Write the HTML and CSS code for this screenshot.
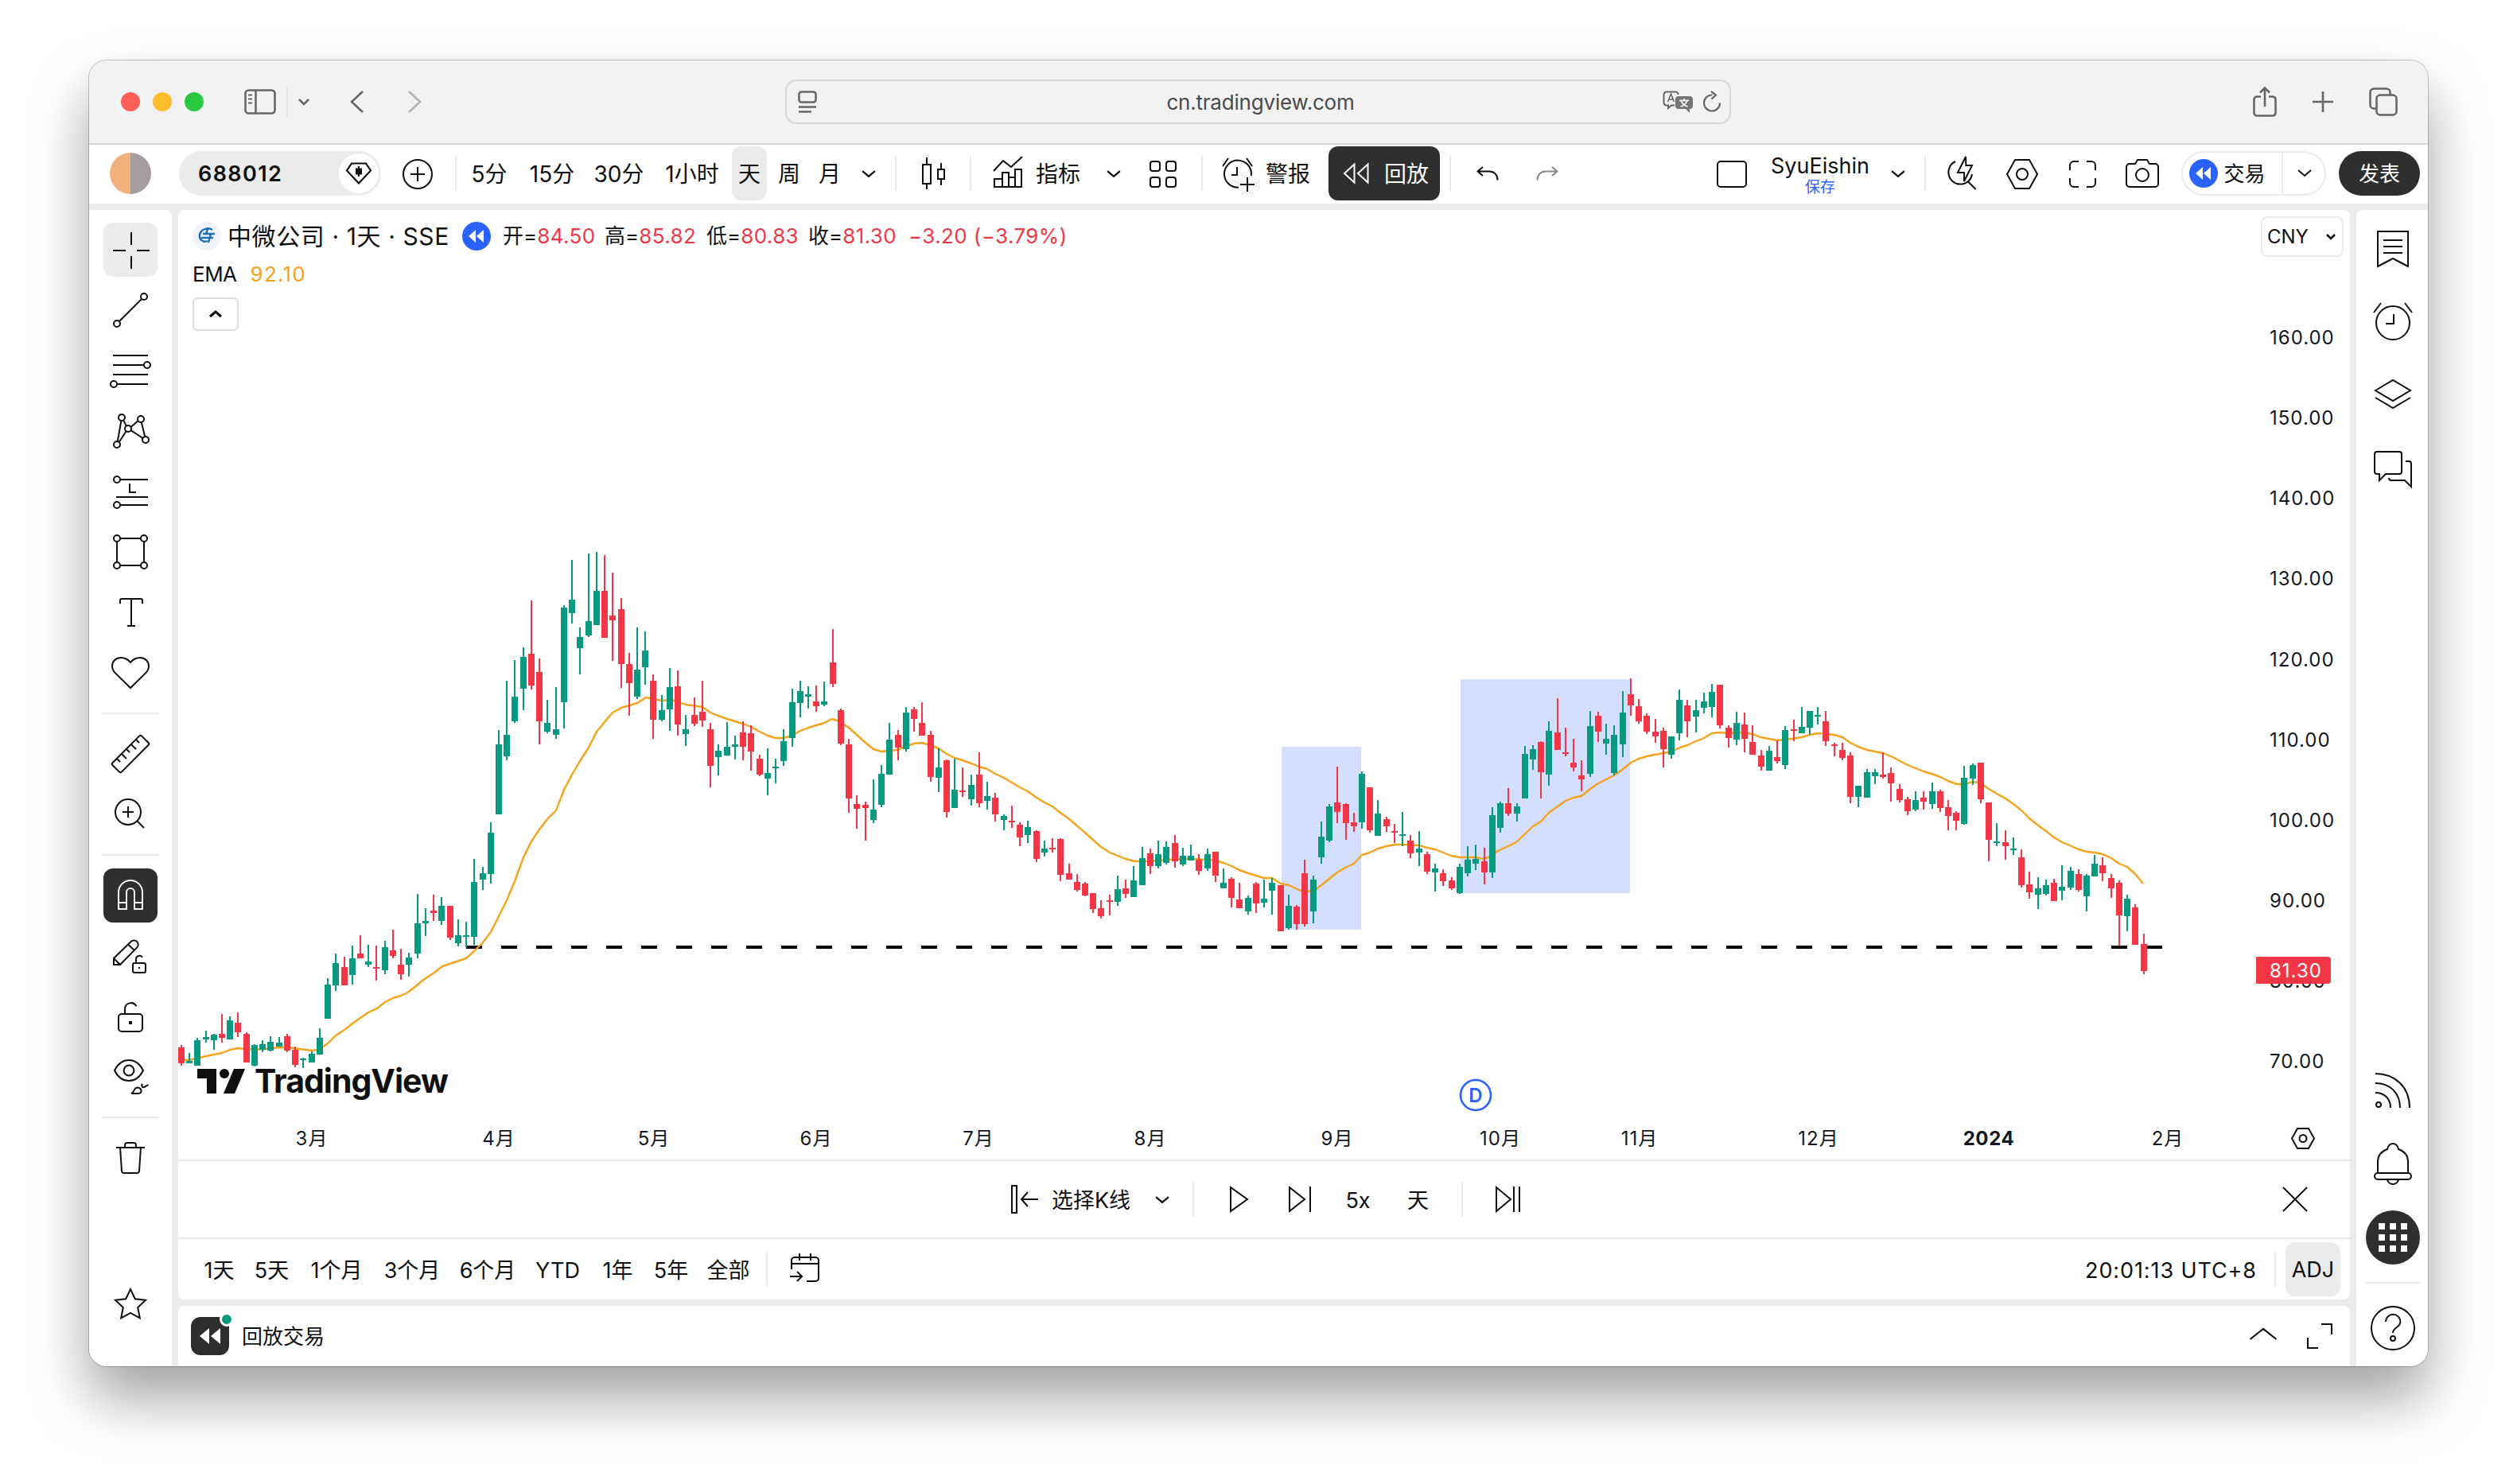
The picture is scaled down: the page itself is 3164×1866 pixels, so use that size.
FILE: index.html
```html
<!DOCTYPE html>
<html lang="zh-CN">
<head>
    <meta charset="UTF-8">
    <meta name="viewport" content="width=device-width, initial-scale=1.0">
    <title>688012 中微公司</title>
    <link rel="stylesheet" href="styles.css">
</head>
<body>
    <div class="window">

        <!-- Browser title bar -->
        <div class="titlebar">
            <span class="light red"></span>
            <span class="light yellow"></span>
            <span class="light green"></span>
            <svg class="tb-sidebar" width="40" height="32" viewBox="0 0 40 32"><rect x="1.5" y="1.5" width="37" height="29" rx="4"/><path d="M14.5 2v28"/><path d="M5 7.500h5M5 12.500h5M5 17.500h5" stroke-width="2"/></svg>
            <span class="tb-divider"></span>
            <svg class="tb-caret" width="16" height="10" viewBox="0 0 16 10"><path d="M2 2l6 6 6-6"/></svg>
            <svg class="tb-back" width="20" height="30" viewBox="0 0 20 30"><path d="M17 2L3 15l14 13"/></svg>
            <svg class="tb-forward" width="20" height="30" viewBox="0 0 20 30"><path d="M3 2l14 13L3 28"/></svg>
            <div class="address">
                <svg width="24" height="28" viewBox="0 0 24 28"><rect x="1.500" y="1.500" width="21" height="13" rx="3"/><path d="M1 20.500h22M1 26.500h16"/></svg>
                <span class="url">cn.tradingview.com</span>
                <svg class="translate" width="38" height="28" viewBox="0 0 38 28"><path d="M15 18.500h-4l-4 3.500v-3.500H5A3.500 3.500 0 0 1 1.500 15V5A3.500 3.500 0 0 1 5 1.500h11A3.500 3.500 0 0 1 19.500 5" stroke-width="2"/><path d="M6.500 14l4-10 4 10M8 11h5" stroke-width="1.600"/><path class="solid" d="M20 7h14a4 4 0 0 1 4 4v8a4 4 0 0 1-4 4v5l-5-5h-9a4 4 0 0 1-4-4v-8a4 4 0 0 1 4-4z"/><path class="cut" d="M21 12.500h12M27 10v2.500M23.500 13c1 3 4 6 8 7M30.500 13c-1 3-4 6-8 7"/></svg>
                <svg width="24" height="28" viewBox="0 0 24 28"><path d="M12.500 5.500a10 10 0 1 0 9.500 10" stroke-width="2.200"/><path d="M11 1l6 4.500-5.500 5" stroke-width="2.200"/></svg>
            </div>
            <svg class="tb-share" width="30" height="38" viewBox="0 0 30 38"><path d="M10 12.500H5a3.500 3.500 0 0 0-3.500 3.500v17A3.500 3.500 0 0 0 5 36.500h20a3.500 3.500 0 0 0 3.500-3.500V16a3.500 3.500 0 0 0-3.500-3.500h-5M15 25V2M9 7.500L15 1.500l6 6"/></svg>
            <svg class="tb-plus" width="28" height="28" viewBox="0 0 28 28"><path d="M14 1v26M1 14h26"/></svg>
            <svg class="tb-tabs" width="36" height="36" viewBox="0 0 36 36"><rect x="9.500" y="9.500" width="25" height="25" rx="4.500"/><path d="M9 26.500H6A4.500 4.500 0 0 1 1.500 22V6A4.500 4.500 0 0 1 6 1.500h16A4.500 4.500 0 0 1 26.500 6v3"/></svg>
        </div>

        <!-- Top toolbar -->
        <div class="toolbar">
            <span class="avatar"></span>
            <div class="symbol-search">
                <b>688012</b>
                <span class="symbol-badge"><svg width="34" height="28" viewBox="0 0 34 28"><path d="M8 1.500h18l6 9-15 16-15-16z"/><path class="solid" d="M13 7.500h8v8h-8z"/><path d="M17 5v13"/></svg></span>
            </div>
            <svg class="icon" viewBox="0 0 28 28"><circle cx="14" cy="14.500" r="9"/><path d="M14 10v9M9.500 14.500h9"/></svg>
            <i class="sep"></i>
            <span class="label">5分</span>
            <span class="label">15分</span>
            <span class="label">30分</span>
            <span class="label">1小时</span>
            <span class="interval-active">天</span>
            <span class="label">周</span>
            <span class="label">月</span>
            <svg class="caret" viewBox="0 0 16 8"><path d="M1 1l7 6 7-6"/></svg>
            <i class="sep"></i>
            <svg class="icon candle-icon" viewBox="0 0 28 28"><path d="M8 8.500h5v12H8zM10.500 4v4.500M10.500 20.500v3.500M17.500 11.500h4v6h-4zM19.500 7.500v4M19.500 17.500v4"/></svg>
            <i class="sep"></i>
            <div class="labelled">
                <svg class="icon" viewBox="0 0 28 28"><path d="M5 12.500l6-6.500 5 4 7-6.500M5.500 22.500v-5h5v5zM10.500 22.500v-9h4v9M14.500 22.500v-6h4v6M18.500 22.500V11.500h4v11h-17"/></svg>
                <span class="label">指标</span>
            </div>
            <svg class="caret" viewBox="0 0 16 8"><path d="M1 1l7 6 7-6"/></svg>
            <svg class="icon" viewBox="0 0 28 28"><rect x="6" y="6.500" width="6" height="6" rx="1.500"/><rect x="16" y="6.500" width="6" height="6" rx="1.500"/><rect x="6" y="16.500" width="6" height="6" rx="1.500"/><rect x="16" y="16.500" width="6" height="6" rx="1.500"/></svg>
            <i class="sep"></i>
            <div class="labelled alert">
                <svg class="icon" viewBox="0 0 28 28"><path d="M14.500 22.800a8.500 8.500 0 1 1 7.900-7.300M13.500 10v5h-3.500M4.500 9.500l3.500-5M23 9.500l-3.500-5M20 16.500v9M15.500 21h9"/></svg>
                <span class="label">警报</span>
            </div>
            <div class="replay-button">
                <svg width="34" height="28" viewBox="0 0 34 28"><path d="M14.500 2.500v23L2 14zM31.500 2.500v23L19 14z"/></svg>
                <span class="label">回放</span>
            </div>
            <i class="sep"></i>
            <svg class="undo" viewBox="0 0 28 18"><path d="M8 1L1.500 6.500 8 12M2 6.500h14c6 0 10.500 4 10.500 11"/></svg>
            <svg class="redo" viewBox="0 0 28 18"><path d="M20 1l6.500 5.500L20 12M26 6.500H12C6 6.500 1.500 10.500 1.500 17.500"/></svg>
            <span></span>
            <svg class="icon" viewBox="0 0 28 28"><rect x="5" y="6.500" width="18" height="16" rx="2"/></svg>
            <div class="layout-name"><span>SyuEishin</span><small>保存</small></div>
            <svg class="caret" viewBox="0 0 16 8"><path d="M1 1l7 6 7-6"/></svg>
            <i class="sep"></i>
            <svg class="icon" viewBox="0 0 28 28"><path d="M10 6.500a7.500 7.500 0 0 0 3 14.300c4 0 7-2.800 7.500-6.300M17.800 19l5 5M16.500 3.500l-5 10h4v5.500l5-10h-3.800z"/></svg>
            <svg class="icon" viewBox="0 0 28 28"><path d="M9.500 5.500h9l5 9-5 9h-9l-5-9z"/><circle cx="14" cy="14.500" r="3.500"/></svg>
            <svg class="icon" viewBox="0 0 28 28"><path d="M6 12V9a2.500 2.500 0 0 1 2.500-2.500h3M16.500 6.500h3A2.500 2.500 0 0 1 22 9v3M22 17v3a2.500 2.500 0 0 1-2.500 2.500h-3M11.500 22.500h-3A2.500 2.500 0 0 1 6 20v-3"/></svg>
            <svg class="icon" viewBox="0 0 28 28"><path d="M4 10a2 2 0 0 1 2-2h3.500L11 5.500h6L18.500 8H22a2 2 0 0 1 2 2v10.500a2 2 0 0 1-2 2H6a2 2 0 0 1-2-2z"/><circle cx="14" cy="15" r="4"/></svg>
            <div class="trade">
                <span class="rewind-badge"><svg viewBox="0 0 36 36"><path d="M17 10v16L8 18zM27 10v16l-9-8z"/></svg></span>
                <span class="label">交易</span>
                <span class="trade-more"><svg viewBox="0 0 20 10"><path d="M2 1l8 7 8-7"/></svg></span>
            </div>
            <div class="publish">发表</div>
        </div>

        <div class="workspace">

            <!-- Drawing tools -->
            <div class="tools">
                <span class="tool selected"><svg class="icon" viewBox="0 0 28 28"><path d="M14.500 3v8M14.500 18v8M3 14.500h8M18 14.500h8"/></svg></span>
                <span class="tool"><svg class="icon" viewBox="0 0 28 28"><circle cx="22.500" cy="5.500" r="2"/><circle cx="5.500" cy="22.500" r="2"/><path d="M7 21L21 7"/></svg></span>
                <span class="tool"><svg class="icon" viewBox="0 0 28 28"><path d="M3 4.500h22M3 10.500h19.500M3 16.500h22M5.500 22.500H25"/><circle cx="24.500" cy="10.500" r="2"/><circle cx="3.500" cy="22.500" r="2"/></svg></span>
                <span class="tool"><svg class="icon" viewBox="0 0 28 28"><circle cx="8.500" cy="5.500" r="2"/><circle cx="20.500" cy="6.500" r="2"/><circle cx="12.500" cy="12.500" r="2"/><circle cx="5.500" cy="22.500" r="2"/><circle cx="23.500" cy="19.500" r="2"/><path d="M8.200 7.500L5.900 20.500M9.600 7.200l1.800 3.600M6.800 21l4.500-6.900M14.200 11.500l4.500-3.900M20.900 8.500l2.200 9M14.300 13.600l7.500 4.900"/></svg></span>
                <span class="tool"><svg class="icon" viewBox="0 0 28 28"><path d="M7.500 6.500H25M13.500 9v5.500h4M5 17.500h20M7.500 22.500H25"/><circle cx="5.500" cy="6.500" r="2"/><circle cx="5.500" cy="22.500" r="2"/></svg></span>
                <span class="tool"><svg class="icon" viewBox="0 0 28 28"><circle cx="5.500" cy="5.500" r="2"/><circle cx="22.500" cy="5.500" r="2"/><circle cx="5.500" cy="22.500" r="2"/><circle cx="22.500" cy="22.500" r="2"/><path d="M7.500 5.500h13M7.500 22.500h13M5.500 7.500v13M22.500 7.500v13"/></svg></span>
                <span class="tool"><svg class="icon" viewBox="0 0 28 28"><path d="M7.500 8.500v-2a1 1 0 0 1 1-1h12a1 1 0 0 1 1 1v2M14.500 5.500v17M12 22.500h5"/></svg></span>
                <span class="tool"><svg class="icon" viewBox="0 0 28 28"><path d="M14 7.500C12.500 5.600 10.300 4.500 8 4.500c-3.200 0-5.500 2.300-5.500 5.300 0 1.800.8 3.200 2 4.400L14 23.500l9.500-9.300c1.200-1.200 2-2.600 2-4.400 0-3-2.300-5.300-5.500-5.300-2.300 0-4.500 1.100-6 3z"/></svg></span>
                <hr>
                <span class="tool"><svg class="icon" viewBox="0 0 28 28"><path d="M2.700 19.600L19.600 2.700a1 1 0 0 1 1.400 0l4.300 4.300a1 1 0 0 1 0 1.400L8.400 25.300a1 1 0 0 1-1.400 0l-4.300-4.300a1 1 0 0 1 0-1.400zM5.500 17l2 2M8.500 14l3 3M11.500 11l2 2M14.500 8l3 3M17.500 5l2 2"/></svg></span>
                <span class="tool"><svg class="icon" viewBox="0 0 28 28"><circle cx="12.500" cy="12.500" r="8"/><path d="M12.500 9v7M9 12.500h7M18.200 18.200l4.300 4.300"/></svg></span>
                <hr>
                <span class="tool dark"><svg class="icon" viewBox="0 0 28 28"><path d="M6.500 22.500V12a7.500 7.500 0 0 1 15 0v10.500h-5V12a2.500 2.500 0 0 0-5 0v10.500zM6.500 18.500h5M16.500 18.500h5"/></svg></span>
                <span class="tool"><svg class="icon" viewBox="0 0 28 28"><path d="M3.500 19.500v-4L14.300 5a2.600 2.600 0 0 1 3.800 3.700L7.500 19.500zM3.500 15.500l4 4M12.500 6.700l4 3.800"/><rect x="15.500" y="18.500" width="8" height="6" rx="1"/><path d="M17.500 18.500V16a2.200 2.200 0 0 1 4-1.200M19.500 21v1"/></svg></span>
                <span class="tool"><svg class="icon" viewBox="0 0 28 28"><rect x="6.500" y="12.500" width="15" height="11" rx="2"/><path d="M10.500 12.500V9.300a3.800 3.800 0 0 1 7.200-1.600"/><path d="M14 17v2" stroke-width="2"/></svg></span>
                <span class="tool"><svg class="icon" viewBox="0 0 28 28"><path d="M4 10c2-4 5.200-6.500 9-6.500s7 2.500 9 6.500c-2 4-5.200 6.500-9 6.500S6 14 4 10z"/><circle cx="13" cy="10" r="3.200"/><path d="M14.500 24.500c1.500-.5 1.500-2.500 3-3.500 1.500-.8 3.300.3 3.300 1.700 0 1-.8 1.800-2.300 1.800zM21.500 18.500c-1 1.200.2 2.600 1.500 1.800l2.200-1.300"/></svg></span>
                <hr>
                <span class="tool"><svg class="icon" viewBox="0 0 28 28"><path d="M5 7.500h18M10.500 7.500V6A1.500 1.500 0 0 1 12 4.500h4A1.500 1.500 0 0 1 17.500 6v1.500M7.500 7.500l1 14.600a1.500 1.500 0 0 0 1.500 1.400h8a1.500 1.500 0 0 0 1.500-1.400l1-14.600"/></svg></span>
                <span class="tool favorite"><svg class="icon" viewBox="0 0 28 28"><path d="M14 4.500l2.900 6.100 6.600.8-4.900 4.600 1.300 6.700-5.900-3.300-5.900 3.300L9.400 16l-4.900-4.600 6.600-.8z"/></svg></span>
            </div>

            <div class="center">
                <div class="panel">

                    <!-- Chart -->
                    <div class="chart">
                        <svg id="chart" class="plot" viewBox="224 264 2730 1194" width="2730" height="1194"></svg>
                        <div class="legend">
                            <div class="legend-row">
                                <span class="company-logo"><svg viewBox="0 0 36 36"><path d="M25 10c-6-4-15 0-16 6-1 7 5 10 10 8M13 15h15M11 20h15M19 9l-2 6M23 15l-3 11"/></svg></span>
                                <span class="company">中微公司 · 1天 · SSE</span>
                                <span class="rewind-badge"><svg viewBox="0 0 36 36"><path d="M17 10v16L8 18zM27 10v16l-9-8z"/></svg></span>
                                <span class="ohlc">开=<em>84.50</em></span>
                                <span class="ohlc">高=<em>85.82</em></span>
                                <span class="ohlc">低=<em>80.83</em></span>
                                <span class="ohlc">收=<em>81.30</em></span>
                                <span class="change">−3.20 (−3.79%)</span>
                            </div>
                            <div class="ema-row"><span>EMA</span><em>92.10</em></div>
                            <div class="collapse"><svg viewBox="0 0 18 10"><path d="M2 8l7-6 7 6"/></svg></div>
                        </div>
                        <div class="currency"><span>CNY</span><svg viewBox="0 0 12 8"><path d="M1 1l5 5 5-5"/></svg></div>
                    </div>

                    <!-- Replay controls -->
                    <div class="replay-bar">
                        <span></span>
                        <div class="labelled">
                            <svg class="icon" viewBox="0 0 28 28"><path d="M6.500 5.500h3v17h-3zM23 14H13M16.500 9.500L12.500 14l4 4.500"/></svg>
                            <span class="label">选择K线</span>
                        </div>
                        <svg class="caret" viewBox="0 0 16 8"><path d="M1 1l7 6 7-6"/></svg>
                        <i class="sep"></i>
                        <svg class="icon" viewBox="0 0 28 28"><path d="M9 6.500l10.500 7.500L9 21.500z"/></svg>
                        <svg class="icon" viewBox="0 0 28 28"><path d="M7.500 6.500L17 14l-9.500 7.500zM20.500 6v16"/></svg>
                        <span class="label">5x</span>
                        <span class="label">天</span>
                        <i class="sep"></i>
                        <svg class="icon" viewBox="0 0 28 28"><path d="M6.500 6.500L15.500 14l-9 7.500zM17.500 6v16M21 6v16"/></svg>
                        <span></span>
                        <svg class="icon" viewBox="0 0 28 28"><path d="M6.500 6.500l15 15M21.500 6.500l-15 15"/></svg>
                    </div>

                    <!-- Date ranges -->
                    <div class="range-bar">
                        <span class="label">1天</span>
                        <span class="label">5天</span>
                        <span class="label">1个月</span>
                        <span class="label">3个月</span>
                        <span class="label">6个月</span>
                        <span class="label">YTD</span>
                        <span class="label">1年</span>
                        <span class="label">5年</span>
                        <span class="label">全部</span>
                        <i class="sep"></i>
                        <svg class="icon" viewBox="0 0 28 28"><path d="M5.500 14V8.500a2 2 0 0 1 2-2h13a2 2 0 0 1 2 2v11a2 2 0 0 1-2 2H15M5.500 10.500h17M10.500 4v4.500M17.500 4v4.500M4.500 18.500h7M9 15.500l3 3-3 3"/></svg>
                        <span></span>
                        <span class="label clock">20:01:13 UTC+8</span>
                        <i class="sep"></i>
                        <span class="adj">ADJ</span>
                    </div>
                </div>

                <!-- Replay trading panel -->
                <div class="panel trading">
                    <span class="trading-icon"><svg viewBox="0 0 48 48"><path d="M23 14v20L11 24zM37 14v20L25 24z"/></svg><i></i></span>
                    <span class="label">回放交易</span>
                    <svg class="trading-up" viewBox="0 0 36 18"><path d="M1.500 16L18 3l16.500 13"/></svg>
                    <svg class="trading-max" viewBox="0 0 32 32"><path d="M18 1h13v13M1 18v13h13"/></svg>
                </div>
            </div>

            <!-- Right widget bar -->
            <div class="widgets">
                <span><svg class="icon" viewBox="0 0 28 28"><path d="M4.500 3h19v22L14 20l-9.500 5zM8 8.500h12M8 12.500h12M8 16.500h12"/></svg></span>
                <span><svg class="icon" viewBox="0 0 28 28"><circle cx="14" cy="14.500" r="10.500"/><path d="M14.500 9v6H9.500M2 8l4.500-6M26 8l-4.500-6"/></svg></span>
                <span><svg class="icon" viewBox="0 0 28 28"><path d="M3 11L14 4.500 25 11l-11 6.500zM3 15.500L14 22l11-6.500"/></svg></span>
                <span><svg class="icon" viewBox="0 0 28 28"><path d="M4 3.500h14a1.500 1.500 0 0 1 1.500 1.500v11a1.500 1.500 0 0 1-1.500 1.500H9.500l-4 4v-4H4A1.500 1.500 0 0 1 2.500 16V5A1.500 1.500 0 0 1 4 3.500zM22 9.500h2a1.500 1.500 0 0 1 1.500 1.500v14.500l-4-4H13a1.500 1.500 0 0 1-1.500-1.500"/></svg></span>
                <span class="push"><svg class="icon" viewBox="0 0 28 28"><circle cx="5" cy="22.500" r="1.500"/><path d="M3 3c12.500 0 21.500 8.500 21.500 21.500M3 9c9 0 15.500 6 15.500 15.500M3 15c5.500 0 9.500 3.500 9.500 9.500"/></svg></span>
                <span><svg class="icon" viewBox="0 0 28 28"><path d="M4.500 19.500v-7c0-4 2.300-6.700 6-8 .4-2 1.700-3.500 3.500-3.500s3.100 1.500 3.500 3.500c3.700 1.300 6 4 6 8v7"/><rect x="2.500" y="19.500" width="23" height="4" rx="2"/><path d="M10.500 23.500c.3 1.700 1.700 3 3.500 3s3.200-1.300 3.500-3"/></svg></span>
                <span><svg class="apps" viewBox="0 0 68 68"><circle cx="34" cy="34" r="34"/><path d="M16 16h8v8h-8zM30 16h8v8h-8zM44 16h8v8h-8zM16 30h8v8h-8zM30 30h8v8h-8zM44 30h8v8h-8zM16 44h8v8h-8zM30 44h8v8h-8zM44 44h8v8h-8z"/></svg></span>
                <hr>
                <span><svg class="icon" viewBox="0 0 28 28"><circle cx="14" cy="14" r="13.500"/><path d="M9.500 10a4.600 4.600 0 0 1 9.200 0c0 3.500-4.700 3.500-4.700 7"/><circle cx="14" cy="20.500" r="1.500"/></svg></span>
            </div>
        </div>
    </div>

    <script src="script.js"></script>
</body>
</html>
```
FILE: styles.css
```css
* {
    box-sizing: border-box;
}
body {
    margin: 0;
    height: 1866px;
    background-color: #fff;
    color: #0f0f0f;
    font-family: Inter, "Noto Sans CJK SC", sans-serif;
    font-size: 28px;
    line-height: 1;
    overflow: hidden;
}
em, i {
    font-style: normal;
}
svg {
    display: block;
    flex-shrink: 0;
    fill: none;
    stroke: #0f0f0f;
}
.window {
    width: 2940px;
    height: 1642px;
    margin: 76px 0 0 112px;
    display: flex;
    flex-direction: column;
    border-radius: 22px;
    overflow: hidden;
    background-color: #ebebeb;
    box-shadow: 0 0 0 1px rgba(0, 0, 0, 0.22), 0 40px 72px rgba(0, 0, 0, 0.37);
}

/* Browser title bar */
.titlebar {
    height: 106px;
    display: flex;
    align-items: center;
    padding: 0 38px 0 40px;
    background-color: #f2f2f2;
    border-bottom: 2px solid #d9d9d9;
}
.titlebar svg {
    stroke: #666;
    stroke-width: 2.6;
}
.light {
    width: 24px;
    height: 24px;
    margin-right: 16px;
    border-radius: 50%;
}
.red { background-color: #ff5f57; }
.yellow { background-color: #febc2e; }
.green { background-color: #28c840; }
.tb-sidebar { margin-left: 35px; }
.tb-divider {
    width: 2px;
    height: 36px;
    margin: 0 12px 0 13px;
    background-color: #e4e4e4;
}
.tb-back { margin-left: 49px; }
.tb-forward { margin-left: 52px; opacity: 0.45; }
.address {
    width: 1190px;
    height: 56px;
    margin-left: 456px;
    padding: 0 10px 0 14px;
    display: flex;
    align-items: center;
    border: 2px solid #d8d8d8;
    border-radius: 14px;
}
.url {
    flex: 1;
    padding: 2px 0 0 52px;
    text-align: center;
    font-size: 26px;
    letter-spacing: -0.2px;
    color: #4a4a4a;
}
.translate { margin-right: 12px; }
.address .solid { fill: #757575; stroke: none; }
.address .cut { stroke: #f2f2f2; stroke-width: 1.8; }
.tb-share { margin-left: 656px; }
.tb-plus { margin-left: 44px; }
.tb-tabs { margin-left: 44px; }

/* Top toolbar */
.toolbar {
    height: 74px;
    display: grid;
    grid-template-columns: 104px 266px 86px 10px 74px 84px 84px 100px 44px 56px 46px 52px 16px 78px 16px 141px 62px 62px 35px 136px 152px 14px 79px 72px 1fr 72px 150px 46px 22px 70px 82px 70px 79px 201px 116px;
    align-items: center;
    justify-items: center;
    padding: 0 3px 2px 0;
    background-color: #fff;
    white-space: nowrap;
}
.label {
    padding-top: 2px;
}
.icon {
    width: 56px;
    height: 56px;
}
.candle-icon {
    margin-right: 2px;
}
.caret {
    width: 18px;
    height: 9px;
    stroke-width: 2;
}
.sep {
    width: 2px;
    height: 44px;
    background-color: #ebebeb;
}
.avatar {
    width: 52px;
    height: 52px;
    border-radius: 50%;
    background: linear-gradient(90deg, #f0b27c 50%, #a69b9f 50%);
}
.symbol-search {
    width: 254px;
    height: 56px;
    margin-left: 6px;
    padding: 0 3px 0 24px;
    display: flex;
    align-items: center;
    justify-content: space-between;
    border-radius: 28px;
    background-color: #ebebeb;
}
.symbol-search b {
    font-weight: 600;
    letter-spacing: 1.4px;
    font-size: 27px;
}
.symbol-badge {
    width: 50px;
    height: 50px;
    display: flex;
    align-items: center;
    justify-content: center;
    border-radius: 50%;
    background-color: #fff;
}
.symbol-badge svg {
    stroke-width: 2.2;
}
.symbol-badge .solid {
    fill: #0f0f0f;
    stroke: none;
}
.interval-active {
    width: 44px;
    height: 68px;
    line-height: 70px;
    text-align: center;
    border-radius: 12px;
    background-color: #ebebeb;
}
.labelled {
    display: flex;
    align-items: center;
    gap: 7px;
}
.alert {
    justify-self: start;
}
.replay-button {
    width: 140px;
    height: 68px;
    padding-left: 18px;
    display: flex;
    align-items: center;
    gap: 18px;
    border-radius: 12px;
    background-color: #2e2e2e;
    color: #fff;
}
.replay-button svg {
    stroke: #fff;
    stroke-width: 2;
}
.undo, .redo {
    width: 28px;
    height: 18px;
    stroke-width: 2;
}
.redo {
    opacity: 0.5;
}
.layout-name {
    display: flex;
    flex-direction: column;
    align-items: center;
    gap: 4px;
    padding-top: 4px;
    font-size: 27px;
}
.layout-name small {
    font-size: 19px;
    color: #2962ff;
}
.trade {
    width: 182px;
    height: 56px;
    padding-left: 8px;
    display: flex;
    align-items: center;
    border: 2px solid #ebebeb;
    border-radius: 28px;
    font-size: 26px;
}
.rewind-badge {
    width: 36px;
    height: 36px;
    border-radius: 50%;
    background-color: #2962ff;
}
.rewind-badge path {
    fill: #fff;
    stroke: none;
}
.trade .rewind-badge {
    margin-right: 8px;
}
.trade-more {
    height: 100%;
    margin-left: 20px;
    padding-left: 17px;
    display: flex;
    align-items: center;
    border-left: 2px solid #ebebeb;
}
.trade-more svg {
    width: 20px;
    height: 10px;
    stroke-width: 2;
}
.publish {
    width: 102px;
    height: 56px;
    line-height: 58px;
    text-align: center;
    border-radius: 28px;
    background-color: #2e2e2e;
    color: #fff;
    font-size: 26px;
}

/* Workspace */
.workspace {
    flex: 1;
    display: flex;
    gap: 8px;
    padding-top: 8px;
    min-height: 0;
}
.tools {
    width: 104px;
    padding: 16px 0 44px;
    display: flex;
    flex-direction: column;
    align-items: center;
    gap: 8px;
    border-top-right-radius: 8px;
    background-color: #fff;
}
.tool {
    width: 68px;
    height: 68px;
    display: flex;
    align-items: center;
    justify-content: center;
    border-radius: 12px;
}
.selected {
    background-color: #ebebeb;
}
.dark {
    background-color: #2e2e2e;
}
.dark svg {
    stroke: #fff;
}
.tools hr, .widgets hr {
    width: 72px;
    height: 2px;
    margin: 8px 0;
    border: none;
    background-color: #ebebeb;
}
.favorite {
    margin-top: auto;
}
.center {
    flex: 1;
    display: flex;
    flex-direction: column;
    gap: 8px;
}
.panel {
    border-radius: 8px;
    background-color: #fff;
}

/* Chart */
.chart {
    position: relative;
    height: 1194px;
}
.plot text {
    fill: #131722;
    stroke: none;
    font-size: 24px;
    letter-spacing: 1px;
}
.plot .time-label {
    text-anchor: middle;
}
.plot .strong {
    font-weight: 700;
    letter-spacing: 0.6px;
}
.plot .brand {
    font-size: 41px;
    font-weight: 700;
    letter-spacing: -1px;
    fill: #0f0f0f;
}
.plot .dividend {
    fill: #2962ff;
    font-weight: 600;
    text-anchor: middle;
    letter-spacing: 0;
}
.plot .marker { stroke: #2962ff; stroke-width: 2.6; }
.plot .last-price { fill: #fff; }
.plot .up { fill: #089981; stroke: none; }
.plot .down { fill: #f23645; stroke: none; }
.plot .ink { fill: #0f0f0f; stroke: none; }
.plot .zone { fill: #d4deff; stroke: none; }
.plot .ema { stroke: #f7a21b; stroke-width: 2.4; stroke-linejoin: round; }
.plot .support { stroke: #000; stroke-width: 4; stroke-dasharray: 20 24; }
.legend {
    position: absolute;
    top: 14px;
    left: 18px;
}
.legend-row {
    height: 38px;
    display: flex;
    align-items: center;
    white-space: nowrap;
}
.company-logo {
    width: 36px;
    height: 36px;
    margin-right: 8px;
    border-radius: 50%;
    background-color: #f0f3fa;
}
.company-logo path {
    stroke: #1a6fb5;
    stroke-width: 2.4;
}
.company {
    width: 295px;
    font-size: 30px;
    letter-spacing: 0.6px;
}
.legend .rewind-badge {
    margin-right: 15px;
}
.ohlc {
    width: 128px;
    font-size: 26px;
}
.legend em, .change {
    color: #f23645;
    font-size: 26px;
}
.ohlc em {
    letter-spacing: 0.4px;
}
.change {
    margin-left: -2px;
    letter-spacing: 0.4px;
}
.ema-row {
    height: 58px;
    display: flex;
    align-items: center;
    gap: 17px;
    font-size: 26px;
    letter-spacing: -0.5px;
}
.ema-row em {
    color: #f7a21b;
    letter-spacing: 1.2px;
}
.collapse {
    width: 58px;
    height: 42px;
    display: flex;
    align-items: center;
    justify-content: center;
    border: 2px solid #dcdcdc;
    border-radius: 6px;
}
.collapse svg {
    width: 18px;
    height: 10px;
    stroke-width: 3;
}
.currency {
    position: absolute;
    top: 8px;
    right: 8px;
    width: 104px;
    height: 51px;
    padding: 0 8px 0 6px;
    display: flex;
    align-items: center;
    justify-content: space-between;
    border: 2px solid #ebebeb;
    border-radius: 8px;
    background-color: #fff;
    font-size: 24px;
}
.currency svg {
    width: 12px;
    height: 8px;
    stroke-width: 2.6;
}

/* Replay controls and date ranges */
.replay-bar, .range-bar {
    display: grid;
    align-items: center;
    justify-items: center;
    border-top: 2px solid #ebebeb;
    white-space: nowrap;
}
.replay-bar {
    height: 98px;
    grid-template-columns: 1033px 166px 75px 4px 110px 44px 102px 49px 61px 56px 1fr 69px;
    padding-right: 35px;
    font-size: 27px;
}
.range-bar {
    height: 78px;
    grid-template-columns: 63px 69px 94px 96px 94px 82px 69px 65px 79px 18px 78px 1fr 258px 4px 91px;
    padding: 0 1px 0 20px;
    font-size: 27px;
}
.clock {
    letter-spacing: 0.9px;
}
.adj {
    width: 69px;
    height: 68px;
    line-height: 70px;
    text-align: center;
    border-radius: 12px;
    background-color: #ebebeb;
}

/* Replay trading panel */
.trading {
    flex: 1;
    display: flex;
    align-items: center;
    padding: 0 22px 0 16px;
    border-radius: 8px 8px 0 0;
    font-size: 26px;
}
.trading-icon {
    position: relative;
    width: 48px;
    height: 48px;
    margin-right: 16px;
    border-radius: 12px;
    background-color: #2e2e2e;
}
.trading-icon path {
    fill: #fff;
    stroke: none;
}
.trading-icon i {
    position: absolute;
    top: -6px;
    right: -6px;
    width: 18px;
    height: 18px;
    border: 3px solid #fff;
    border-radius: 50%;
    background-color: #089981;
}
.trading-up {
    width: 36px;
    height: 18px;
    margin: 0 37px 6px auto;
    stroke-width: 2.2;
}
.trading-max {
    width: 32px;
    height: 32px;
    stroke-width: 2;
}

/* Right widget bar */
.widgets {
    width: 90px;
    padding: 3px 0 2px 2px;
    display: flex;
    flex-direction: column;
    align-items: center;
    border-top-left-radius: 8px;
    background-color: #fff;
}
.widgets span {
    height: 92px;
    display: flex;
    align-items: center;
}
.widgets .push {
    margin-top: auto;
}
.widgets hr {
    width: 68px;
    margin: 10px 0;
}
.apps {
    width: 68px;
    height: 68px;
}
.apps circle { fill: #2e2e2e; stroke: none; }
.apps path { fill: #fff; stroke: none; }
```
FILE: script.js
```js
// [up, high, body top, body bottom, low]
const candles = [
    [0,1314,1317,1337,1340],[1,1324,1334,1337,1337],[1,1305,1308,1340,1340],[1,1296,1304,1307,1311],[1,1300,1301,1308,1320],
    [0,1275,1300,1305,1311],[1,1278,1283,1307,1307],[0,1273,1286,1298,1304],[0,1298,1300,1336,1336],[1,1313,1314,1340,1341],
    [1,1308,1313,1320,1323],[1,1303,1310,1321,1322],[1,1304,1311,1316,1316],[0,1300,1303,1321,1323],[0,1316,1320,1339,1342],
    [1,1330,1331,1333,1343],[1,1322,1325,1336,1336],[1,1293,1305,1326,1326],[1,1230,1238,1281,1281],[1,1199,1211,1239,1246],
    [0,1203,1216,1239,1239],[1,1189,1205,1226,1238],[0,1176,1199,1205,1205],[1,1188,1209,1213,1216],[0,1189,1216,1218,1233],
    [1,1183,1191,1220,1225],[0,1169,1195,1202,1205],[0,1193,1213,1225,1232],[1,1198,1204,1213,1228],[1,1124,1161,1199,1205],
    [1,1142,1158,1161,1177],[0,1125,1145,1148,1158],[1,1128,1139,1158,1163],[0,1139,1139,1179,1182],[1,1156,1176,1186,1190],
    [1,1159,1176,1178,1191],[1,1080,1109,1178,1188],[1,1090,1098,1106,1119],[1,1034,1047,1099,1111],[1,918,936,1024,1024],
    [1,856,924,951,956],[1,830,876,907,909],[1,814,826,866,893],[0,755,822,862,867],[0,828,845,907,936],
    [1,880,909,920,922],[1,864,917,924,929],[1,761,764,883,916],[1,704,754,771,784],[1,789,801,815,848],
    [1,696,781,799,801],[1,694,743,786,786],[0,698,743,802,802],[0,720,774,780,831],[0,752,766,835,865],
    [0,821,835,859,900],[1,789,842,876,879],[1,794,818,839,861],[0,848,856,905,929],[1,874,893,905,907],
    [1,840,864,892,919],[0,843,863,911,925],[1,899,917,923,938],[0,877,899,910,913],[0,856,895,906,914],
    [0,909,917,963,990],[1,936,944,952,975],[1,908,939,950,950],[1,925,936,939,955],[0,907,921,939,956],
    [0,912,922,945,969],[0,949,954,974,976],[1,941,972,979,1000],[1,954,964,966,985],[1,917,932,957,963],
    [1,866,883,928,939],[1,856,869,884,902],[1,863,873,876,891],[0,862,882,888,895],[1,857,882,886,888],
    [0,791,833,860,864],[0,891,893,935,937],[0,929,936,1004,1022],[0,1000,1011,1017,1042],[0,1008,1012,1016,1057],
    [1,980,1018,1031,1035],[1,962,973,1012,1015],[1,909,930,974,974],[0,918,924,940,956],[1,889,896,942,945],
    [0,889,892,904,920],[0,883,909,925,925],[0,919,924,977,983],[1,941,965,978,996],[0,955,956,1021,1028],
    [1,954,993,1016,1016],[0,965,994,996,1002],[1,974,987,1005,1013],[0,946,974,1010,1015],[1,983,1001,1007,1018],
    [0,997,1003,1024,1033],[1,1024,1026,1031,1044],[0,1013,1032,1034,1041],[0,1034,1037,1053,1064],[1,1032,1040,1050,1060],
    [0,1044,1045,1080,1084],[1,1057,1067,1072,1077],[0,1054,1066,1068,1072],[0,1054,1055,1100,1108],[0,1086,1098,1106,1106],
    [0,1099,1109,1119,1121],[0,1109,1111,1126,1127],[0,1123,1123,1143,1148],[0,1132,1142,1152,1155],[0,1125,1132,1134,1151],
    [1,1101,1118,1134,1139],[0,1106,1117,1124,1129],[1,1089,1107,1128,1128],[1,1065,1079,1113,1113],[0,1067,1073,1089,1099],
    [1,1057,1074,1089,1092],[1,1058,1065,1085,1087],[0,1050,1060,1083,1091],[1,1066,1076,1087,1089],[1,1062,1076,1082,1082],
    [0,1074,1081,1095,1100],[1,1067,1074,1092,1095],[0,1071,1071,1101,1109],[1,1092,1110,1117,1117],[0,1103,1105,1129,1141],
    [0,1110,1131,1142,1142],[1,1126,1129,1146,1150],[0,1109,1111,1136,1148],[1,1106,1130,1135,1141],[1,1104,1110,1120,1150],
    [0,1113,1113,1171,1171],[1,1125,1139,1167,1169],[0,1138,1140,1162,1169],[0,1081,1098,1162,1165],[1,1101,1106,1146,1161],
    [1,1033,1052,1078,1086],[1,1011,1014,1057,1059],[0,964,1009,1021,1035],[0,1010,1011,1035,1056],[0,1022,1034,1039,1046],
    [1,970,973,1034,1042],[0,990,990,1044,1047],[1,1006,1023,1051,1051],[0,1027,1030,1039,1046],[0,1036,1045,1047,1060],
    [1,1021,1049,1051,1064],[0,1050,1057,1073,1079],[1,1045,1067,1072,1089],[0,1071,1074,1096,1099],[1,1086,1092,1097,1121],
    [0,1093,1098,1108,1114],[0,1103,1107,1117,1119],[1,1086,1090,1123,1124],[1,1064,1081,1098,1102],[1,1062,1080,1086,1094],
    [0,1066,1083,1097,1112],[1,1015,1025,1097,1104],[1,1008,1010,1041,1047],[0,991,1010,1023,1026],[1,1010,1014,1023,1033],
    [1,938,948,1004,1004],[1,937,942,955,968],[0,932,933,971,1004],[1,907,919,974,988],[0,878,921,943,943],
    [0,915,946,948,951],[0,929,959,965,970],[0,956,975,980,995],[1,894,913,973,977],[0,895,900,920,933],
    [1,910,929,935,949],[1,912,924,972,975],[1,869,896,936,952],[0,853,873,887,900],[0,879,888,907,910],
    [0,897,900,920,923],[0,904,920,926,934],[0,915,919,942,965],[1,926,926,949,954],[1,867,880,922,931],
    [0,880,887,907,927],[1,880,893,901,921],[1,871,882,890,897],[1,860,870,889,902],[0,861,861,912,916],
    [0,912,915,928,940],[1,895,909,930,937],[0,896,911,929,946],[0,912,933,949,949],[0,943,950,964,969],
    [1,938,944,969,969],[0,931,952,957,960],[1,913,918,962,967],[0,905,917,919,932],[1,889,914,922,922],
    [1,894,894,915,924],[1,889,899,901,911],[0,894,907,932,938],[0,934,936,938,951],[0,934,943,953,956],
    [0,946,950,1002,1010],[1,988,988,1002,1015],[1,967,971,1003,1003],[1,967,971,976,986],[0,946,974,977,979],
    [0,965,972,985,1008],[0,986,992,1006,1009],[0,1002,1005,1020,1025],[1,995,1006,1018,1020],[0,995,1003,1008,1018],
    [1,984,995,1011,1017],[0,993,995,1016,1021],[0,1006,1015,1026,1044],[0,1020,1022,1032,1044],[1,963,978,1036,1037],
    [1,960,962,979,987],[0,959,959,1005,1010],[0,1009,1009,1056,1083],[1,1035,1058,1060,1064],[0,1044,1059,1064,1081],
    [1,1053,1067,1069,1075],[0,1068,1078,1113,1116],[0,1096,1112,1122,1130],[1,1103,1117,1125,1143],[1,1106,1113,1124,1126],
    [0,1105,1110,1133,1133],[1,1088,1115,1120,1132],[1,1090,1095,1116,1119],[0,1093,1099,1119,1121],[1,1099,1101,1127,1146],
    [1,1075,1086,1102,1102],[0,1078,1088,1098,1108],[0,1099,1104,1117,1129],[0,1107,1110,1151,1189],[1,1125,1130,1152,1171],
    [0,1137,1141,1188,1188],[0,1174,1187,1221,1225]
];

const ema = '230,1333 238,1333 259,1328 269,1326 279,1324 289,1320 299,1318 320,1320 353,1317 361,1317 392,1321 400,1320 412,1312 422,1302 433,1295 443,1287 453,1280 463,1273 474,1268 484,1260 494,1255 504,1252 514,1247 525,1238 535,1230 546,1223 556,1215 574,1209 586,1205 596,1196 607,1185 617,1172 627,1152 637,1132 647,1108 658,1078 668,1058 678,1043 688,1030 699,1019 709,993 719,974 729,957 740,940 750,920 760,908 770,896 781,890 791,887 801,884 812,877 821,879 833,881 842,880 852,882 862,886 883,889 893,896 903,900 914,904 934,910 944,914 955,920 965,925 975,928 985,928 995,925 1006,919 1016,915 1036,909 1046,904 1055,907 1067,915 1077,924 1088,934 1098,942 1108,945 1129,943 1139,938 1149,935 1159,934 1169,937 1180,941 1190,948 1200,953 1210,956 1221,960 1231,964 1241,967 1251,973 1262,978 1272,984 1282,990 1292,995 1303,1003 1313,1009 1323,1014 1333,1022 1343,1029 1364,1047 1374,1056 1384,1065 1395,1072 1405,1076 1415,1080 1426,1083 1437,1083 1456,1082 1470,1081 1485,1080 1500,1080 1513,1081 1528,1082 1538,1085 1548,1089 1558,1094 1569,1098 1579,1101 1589,1104 1599,1104 1610,1111 1620,1113 1635,1120 1645,1121 1653,1119 1661,1113 1681,1097 1691,1091 1702,1086 1712,1075 1722,1072 1732,1067 1743,1064 1753,1062 1763,1062 1784,1063 1794,1066 1804,1068 1814,1072 1824,1076 1835,1078 1855,1078 1865,1080 1874,1077 1881,1071 1896,1064 1906,1059 1927,1039 1937,1033 1947,1022 1958,1014 1968,1007 1978,1003 1988,1001 1999,992 2009,985 2029,975 2039,968 2050,959 2060,954 2070,951 2080,949 2091,947 2101,945 2112,940 2121,937 2132,932 2142,928 2152,922 2162,921 2174,922 2193,921 2203,923 2213,927 2224,929 2234,931 2244,930 2265,927 2275,924 2285,922 2295,923 2306,924 2316,927 2326,934 2336,939 2347,943 2367,947 2377,951 2387,956 2398,962 2408,966 2418,970 2428,973 2439,977 2449,982 2460,986 2469,986 2480,983 2490,985 2500,992 2510,998 2521,1004 2531,1011 2541,1019 2551,1029 2561,1037 2572,1045 2582,1053 2592,1059 2602,1063 2613,1068 2623,1071 2633,1072 2643,1074 2654,1079 2664,1086 2674,1090 2684,1099 2694,1111';

const months = [
    ['3月', 392], ['4月', 627], ['5月', 822], ['6月', 1026], ['7月', 1230], ['8月', 1446],
    ['9月', 1681], ['10月', 1886], ['11月', 2061], ['12月', 2286], ['2024', 2500], ['2月', 2725]
];

let out = '';

// Highlighted ranges and the support line go below the candles
out += '<rect class="zone" x="1611" y="939" width="100" height="230"/>';
out += '<rect class="zone" x="1836" y="854" width="213" height="269"/>';
out += '<path class="support" d="M586 1191H2718"/>';
out += `<polyline class="ema" points="${ema}"/>`;

candles.forEach(([up, high, top, bottom, low], i) => {
    const x = 228 + Math.floor(i * 10.236 + 0.3);
    const cls = up ? 'up' : 'down';
    out += `<path class="${cls}" d="M${x - 1} ${high}h2V${low}h-2zM${x - 4} ${top}h8V${bottom}h-8z"/>`;
});

// Price axis
for (let price = 160; price >= 70; price -= 10) {
    const y = 1334.6 - (price - 70) * 10.115;
    out += `<text x="2853" y="${y + 8.7}">${price}.00</text>`;
}
out += '<path class="down" d="M2836 1203h90a4 4 0 0 1 4 4v26a4 4 0 0 1-4 4h-90z"/>';
out += '<text class="last-price" x="2853" y="1229">81.30</text>';

// Time axis
months.forEach(([label, x]) => {
    const cls = label === '2024' ? 'time-label strong' : 'time-label';
    out += `<text class="${cls}" x="${x}" y="1440">${label}</text>`;
});
out += '<path d="M2888 1419h14l7 12.500-7 12.500h-14l-7-12.500z" stroke-width="2"/><circle cx="2895" cy="1431.500" r="4.500" stroke-width="2"/>';

// Dividend marker
out += '<circle class="marker" cx="1855" cy="1377" r="19"/>';
out += '<text class="dividend" x="1855" y="1386">D</text>';

// TradingView mark
out += '<path class="ink" d="M248 1344h24v31h-12v-19h-12zM294 1344h14l-13 31h-14z"/><circle class="ink" cx="282" cy="1350" r="6"/>';
out += '<text class="brand" x="320" y="1374">TradingView</text>';

document.getElementById('chart').innerHTML = out;
```
